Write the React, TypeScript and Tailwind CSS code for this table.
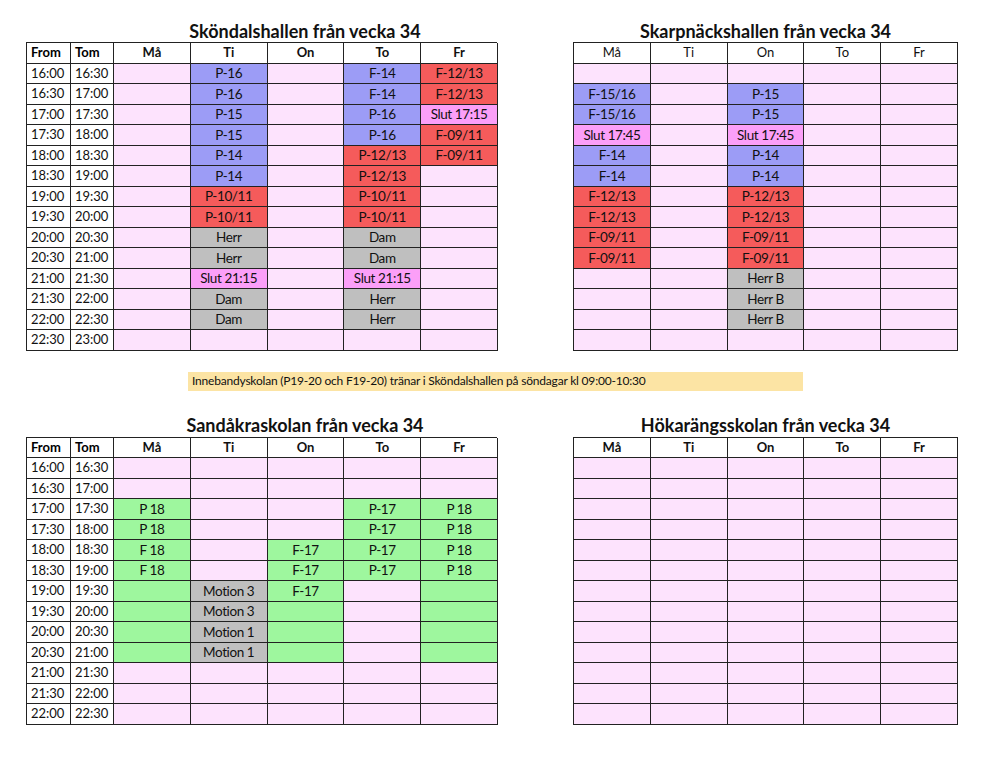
import React from "react"

// cell spec: "" = empty pink, otherwise "<colour>|<text>"
const fills: Record<string, string> = {
  p: "bg-[#fde3fd]",
  b: "bg-[#9c9cf6]",
  r: "bg-[#f55b5b]",
  g: "bg-[#bfbfbf]",
  s: "bg-[#fb9ff8]",
  n: "bg-[#9ef79e]",
}

const days = ["Må", "Ti", "On", "To", "Fr"]

const times = [
  "16:00", "16:30", "17:00", "17:30", "18:00", "18:30", "19:00",
  "19:30", "20:00", "20:30", "21:00", "21:30", "22:00", "22:30", "23:00",
]

const skondal: string[][] = [
  ["", "b|P-16", "", "b|F-14", "r|F-12/13"],
  ["", "b|P-16", "", "b|F-14", "r|F-12/13"],
  ["", "b|P-15", "", "b|P-16", "s|Slut 17:15"],
  ["", "b|P-15", "", "b|P-16", "r|F-09/11"],
  ["", "b|P-14", "", "r|P-12/13", "r|F-09/11"],
  ["", "b|P-14", "", "r|P-12/13", ""],
  ["", "r|P-10/11", "", "r|P-10/11", ""],
  ["", "r|P-10/11", "", "r|P-10/11", ""],
  ["", "g|Herr", "", "g|Dam", ""],
  ["", "g|Herr", "", "g|Dam", ""],
  ["", "s|Slut 21:15", "", "s|Slut 21:15", ""],
  ["", "g|Dam", "", "g|Herr", ""],
  ["", "g|Dam", "", "g|Herr", ""],
  ["", "", "", "", ""],
]

const skarpnack: string[][] = [
  ["", "", "", "", ""],
  ["b|F-15/16", "", "b|P-15", "", ""],
  ["b|F-15/16", "", "b|P-15", "", ""],
  ["s|Slut 17:45", "", "s|Slut 17:45", "", ""],
  ["b|F-14", "", "b|P-14", "", ""],
  ["b|F-14", "", "b|P-14", "", ""],
  ["r|F-12/13", "", "r|P-12/13", "", ""],
  ["r|F-12/13", "", "r|P-12/13", "", ""],
  ["r|F-09/11", "", "r|F-09/11", "", ""],
  ["r|F-09/11", "", "r|F-09/11", "", ""],
  ["", "", "g|Herr B", "", ""],
  ["", "", "g|Herr B", "", ""],
  ["", "", "g|Herr B", "", ""],
  ["", "", "", "", ""],
]

const sandakra: string[][] = [
  ["", "", "", "", ""],
  ["", "", "", "", ""],
  ["n|P 18", "", "", "n|P-17", "n|P 18"],
  ["n|P 18", "", "", "n|P-17", "n|P 18"],
  ["n|F 18", "", "n|F-17", "n|P-17", "n|P 18"],
  ["n|F 18", "", "n|F-17", "n|P-17", "n|P 18"],
  ["n|", "g|Motion 3", "n|F-17", "", "n|"],
  ["n|", "g|Motion 3", "n|", "", "n|"],
  ["n|", "g|Motion 1", "n|", "", "n|"],
  ["n|", "g|Motion 1", "n|", "", "n|"],
  ["", "", "", "", ""],
  ["", "", "", "", ""],
  ["", "", "", "", ""],
]

const hokarang: string[][] = Array.from({ length: 13 }, () => ["", "", "", "", ""])

function DayCell({ spec }: { spec: string }) {
  const [key, text] = spec ? spec.split("|") : ["p", ""]
  return (
    <div className={`${fills[key]} flex h-[20.5px] items-center justify-center border-r border-b border-[#222] text-[13.5px] tracking-[-0.4px] text-[#111]`}>
      {text}
    </div>
  )
}

function Schedule({ rows, withTimes, boldHead }: { rows: string[][]; withTimes: boolean; boldHead: boolean }) {
  return (
    <div className={`grid border-t border-l border-[#222] ${withTimes ? "grid-cols-[44px_43px_repeat(5,76.8px)]" : "grid-cols-[repeat(5,76.8px)]"}`}>
      {withTimes && (
        <>
          <div className="flex h-[20.5px] items-center border-r border-b border-[#222] pl-1 text-[13px] font-bold">From</div>
          <div className="flex h-[20.5px] items-center border-r border-b border-[#222] pl-1 text-[13px] font-bold">Tom</div>
        </>
      )}
      {days.map((d) => (
        <div
          key={d}
          className={`flex h-[20.5px] items-center justify-center border-r border-b border-[#222] bg-white text-[13px] text-[#111] ${boldHead ? "font-bold" : ""}`}
        >
          {d}
        </div>
      ))}
      {rows.map((row, i) => (
        <React.Fragment key={i}>
          {withTimes && (
            <>
              <div className="flex h-[20.5px] items-center border-r border-b border-[#222] pl-1 text-[13px] text-[#111]">{times[i]}</div>
              <div className="flex h-[20.5px] items-center border-r border-b border-[#222] pl-1 text-[13px] text-[#111]">{times[i + 1]}</div>
            </>
          )}
          {row.map((spec, j) => (
            <DayCell key={j} spec={spec} />
          ))}
        </React.Fragment>
      ))}
    </div>
  )
}

function Title({ children, offset }: { children: React.ReactNode; offset: boolean }) {
  return (
    <div className={`flex h-[22px] items-center justify-center text-[18px] font-bold text-[#111] ${offset ? "pl-[87px]" : ""}`}>
      {children}
    </div>
  )
}

export default function App() {
  return (
    <div className="h-[765px] w-[1000px] bg-white pt-[20px] pl-[26px] font-['Lato','Liberation_Sans',sans-serif]">
      {/* Top halls */}
      <div className="flex items-start gap-[76px]">
        <div className="w-[471px]">
          <Title offset>Sköndalshallen från vecka 34</Title>
          <Schedule rows={skondal} withTimes boldHead />
        </div>
        <div className="w-[385px]">
          <Title offset={false}>Skarpnäckshallen från vecka 34</Title>
          <Schedule rows={skarpnack} withTimes={false} boldHead={false} />
        </div>
      </div>

      {/* Note */}
      <div className="mt-[21px] ml-[162px] flex h-[19px] w-[615px] items-center bg-[#fce4a4] pl-1 text-[12px] tracking-[-0.2px] text-[#111]">
        Innebandyskolan (P19-20 och F19-20) tränar i Sköndalshallen på söndagar kl 09:00-10:30
      </div>

      {/* Schools */}
      <div className="mt-[24px] flex items-start gap-[76px]">
        <div className="w-[471px]">
          <Title offset>Sandåkraskolan från vecka 34</Title>
          <Schedule rows={sandakra} withTimes boldHead />
        </div>
        <div className="w-[385px]">
          <Title offset={false}>Hökarängsskolan från vecka 34</Title>
          <Schedule rows={hokarang} withTimes={false} boldHead />
        </div>
      </div>
    </div>
  )
}
